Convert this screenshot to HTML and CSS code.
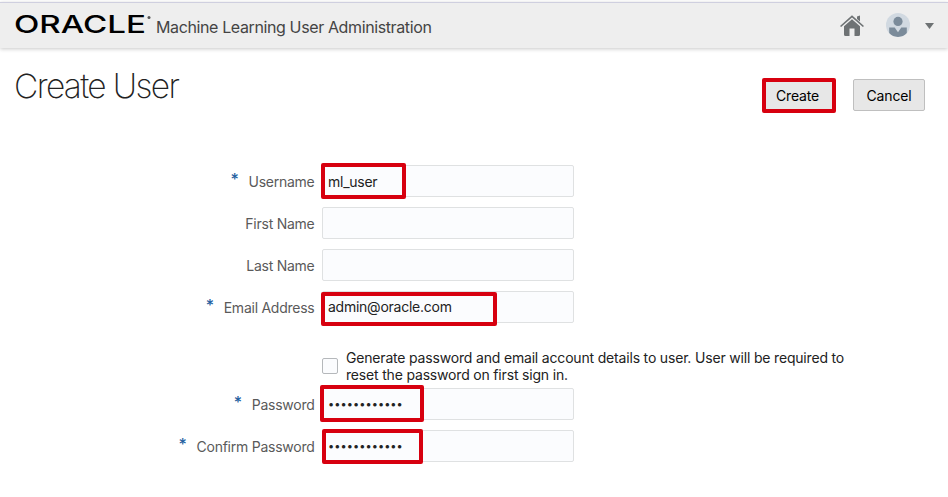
FILE: index.html
```html
<!DOCTYPE html>
<html lang="en">
<head>
<meta charset="utf-8">
<title>Create User</title>
<link rel="stylesheet" href="styles.css">
</head>
<body>
<header class="topbar">
  <svg class="logo" width="140" height="34" viewBox="0 0 140 34" role="img" aria-label="Oracle">
    <text class="wordmark" x="0" y="25" textLength="132" lengthAdjust="spacingAndGlyphs">ORACLE</text>
    <circle cx="135" cy="9.500" r="1.500" class="mark"/>
  </svg>
  <span class="product">Machine Learning User Administration</span>
  <nav class="tools">
    <svg class="home" width="24" height="22" viewBox="0 0 24 22">
      <path d="M17 1.500 20 .6V6.600L17 4z"/>
      <path d="M12 .2 24 10.900 22.900 12 12 2.400 1.100 12 0 10.900z"/>
      <path d="M12 4.200 20 11.300V19.500Q20 21 18.500 21H14.500V13.600H9.500V21H5.500Q4 21 4 19.500V11.300z"/>
    </svg>
    <svg class="avatar" width="24" height="24" viewBox="0 0 24 24">
      <circle class="disc" cx="12" cy="12" r="12"/>
      <circle cx="12" cy="8.400" r="4.600"/>
      <path d="M3.200 14.400H8.700L12 19.200 15.300 14.400H20.800V20.100A12 12 0 0 1 3.200 20.100z"/>
    </svg>
    <svg class="caret" width="10" height="6" viewBox="0 0 10 6"><path d="M0 0H9L4.500 6z"/></svg>
  </nav>
</header>
<main>
  <div class="heading">
    <h1>Create User</h1>
    <div class="actions">
      <button class="btn create">Create<i class="mark-box mb-create"></i></button>
      <button class="btn">Cancel</button>
    </div>
  </div>
  <form class="form">
    <div class="row">
      <label><b>*</b><span>Username</span></label>
      <div class="field"><span>ml_user</span><i class="mark-box mb-user"></i></div>
    </div>
    <div class="row">
      <label><span>First Name</span></label>
      <div class="field"></div>
    </div>
    <div class="row">
      <label><span>Last Name</span></label>
      <div class="field"></div>
    </div>
    <div class="row">
      <label><b>*</b><span>Email Address</span></label>
      <div class="field email"><span>admin@oracle.com</span><i class="mark-box mb-email"></i></div>
    </div>
    <div class="option">
      <span class="check"></span>
      <p>Generate password and email account details to user. User will be required to<br>reset the password on first sign in.</p>
    </div>
    <div class="row">
      <label><b>*</b><span>Password</span></label>
      <div class="field secret"><span>••••••••••••</span><i class="mark-box mb-pass"></i></div>
    </div>
    <div class="row">
      <label><b>*</b><span>Confirm Password</span></label>
      <div class="field secret"><span>••••••••••••</span><i class="mark-box mb-confirm"></i></div>
    </div>
  </form>
</main>
</body>
</html>
```
FILE: styles.css
```css
* { box-sizing: border-box; }
body {
  margin: 0;
  padding-top: 2px;
  height: 497px;
  overflow: hidden;
  background: #fff;
  color: #222;
  font: 14px/17px Inter, "Liberation Sans", sans-serif;
}
.topbar {
  display: flex;
  height: 46px;
  padding: 0 13px 0 14px;
  background: #eee;
  border-top: 1px solid #cfcfdf;
  box-shadow: 0 1px 4px rgba(0, 0, 0, .22);
}
.logo { margin-top: 5px; overflow: visible; }
.wordmark { font: 500 24px Inter, sans-serif; fill: #000; }
.mark { fill: #555; }
.product {
  margin: 14px 0 0 2px;
  font-size: 16px;
  line-height: 20px;
  letter-spacing: -.38px;
  color: #444;
}
.tools { display: flex; margin-left: auto; }
.tools svg { fill: #6e7274; }
.home { margin: 12px 22px 0 0; }
.tools .avatar { margin: 10px 15px 0 0; fill: #7b8b9a; }
.tools .avatar .disc { fill: #d1d9e1; }
.caret { margin-top: 20px; }
.heading {
  display: flex;
  justify-content: space-between;
  height: 117px;
  padding: 18px 23px 0 14px;
}
h1 {
  margin: 0;
  font-size: 33.500px;
  line-height: 40px;
  font-weight: 250;
  letter-spacing: -1.650px;
  color: #222;
}
.actions { display: flex; gap: 18px; margin-top: 13px; }
.btn {
  position: relative;
  width: 72px;
  height: 32px;
  padding: 1px 0 0;
  border: 1px solid #bfbfbf;
  border-radius: 2px;
  background: #e7e7e7;
  color: #000;
  font: inherit;
  letter-spacing: -.15px;
}
.btn.create { width: 70px; padding-right: 5px; }
.form { display: flex; flex-direction: column; }
.row {
  display: flex;
  height: 32px;
  margin-bottom: 10px;
}
label {
  display: flex;
  justify-content: flex-end;
  width: 314.500px;
  margin-right: 7.500px;
  padding-top: 8px;
  color: #5a5a5a;
  letter-spacing: -.25px;
}
label b {
  margin: -2px 10px 0 0;
  color: #1f5f9f;
  font-weight: 500;
  font-size: 16px;
}
.field {
  position: relative;
  width: 252px;
  padding: 7px 5px;
  border: 1px solid #dfe1e2;
  border-radius: 2px;
  background: #fbfcfe;
  letter-spacing: -.25px;
}
.field.email { padding-top: 6px; }
.field.secret {
  padding-top: 7px;
  font-size: 11px;
  letter-spacing: .05px;
}
.mark-box {
  position: absolute;
  border: 4px solid #d7000f;
  border-radius: 2px;
}
.mb-create { left: -4px; top: -2px; width: 74px; height: 35px; }
.mb-user { left: -2px; top: -3px; width: 85px; height: 36px; }
.mb-email { left: -2px; top: 0; width: 176px; height: 34px; }
.mb-pass { left: -3px; top: -4px; width: 104px; height: 37px; }
.mb-confirm { left: -1px; top: -2px; width: 101px; height: 35px; }
.option {
  display: flex;
  height: 55px;
  padding: 16px 0 0 322px;
}
.check {
  width: 16px;
  height: 16px;
  margin: 9px 8px 0 0;
  border: 1px solid #b5b8bb;
  border-radius: 2px;
  background: #fbfcfe;
}
.option p { margin: 0; white-space: nowrap; letter-spacing: -.18px; }
```
